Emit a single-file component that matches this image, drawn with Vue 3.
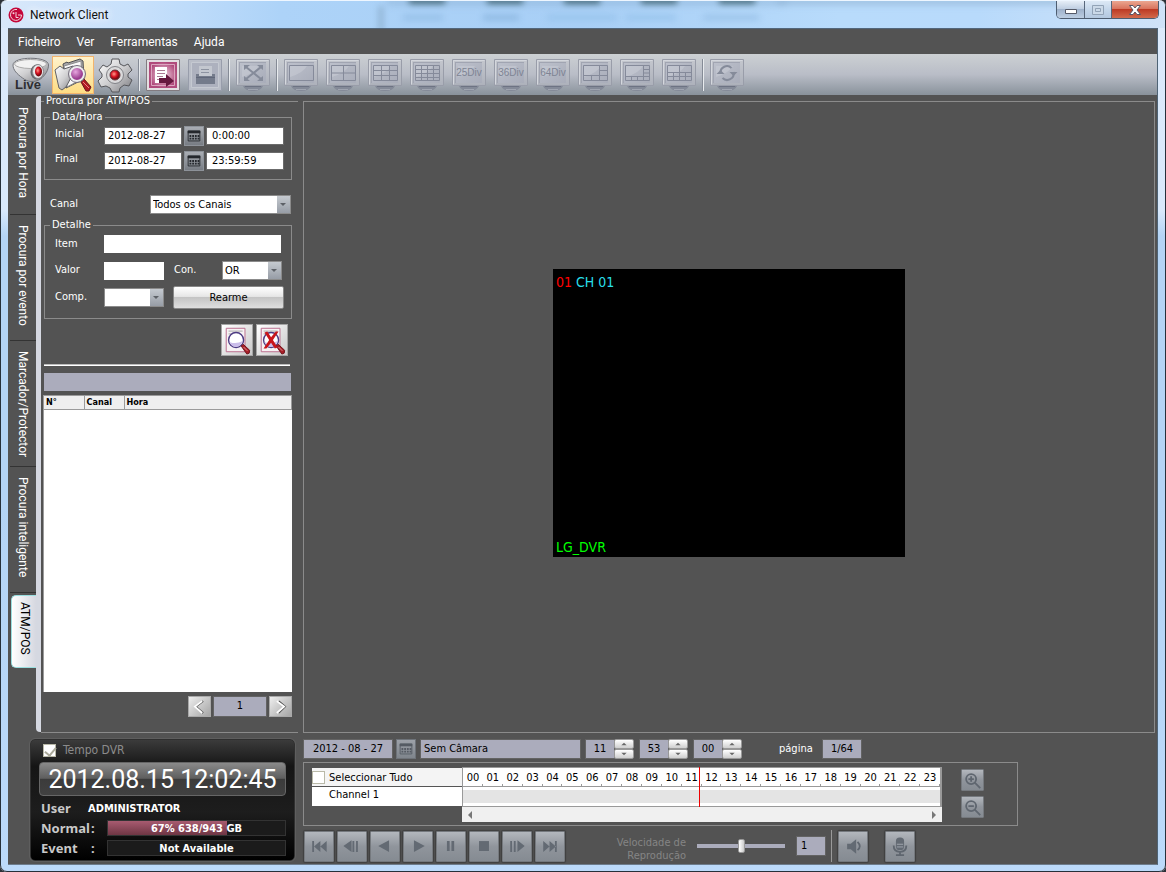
<script setup>
import { ref } from 'vue'

const menus = ['Ficheiro', 'Ver', 'Ferramentas', 'Ajuda']

const frame = 'M5.5 6.5h24v15h-24z'
const monitors = [
  { name: '1', d: frame },
  { name: '4', d: frame + 'M17.5 6.5v15M5.5 14h24' },
  { name: '9', d: frame + 'M13.5 6.5v15M21.5 6.5v15M5.5 11.5h24M5.5 16.5h24' },
  { name: '16', d: frame + 'M11.5 6.5v15M17.5 6.5v15M23.5 6.5v15M5.5 10.5h24M5.5 14.5h24M5.5 18.5h24' },
  { name: '25Div', text: true },
  { name: '36Div', text: true },
  { name: '64Div', text: true },
  { name: '1+5', d: frame + 'M21.5 6.5v15M5.5 16.5h24M21.5 11.5h8M13.5 16.5v5' },
  { name: '1+7', d: frame + 'M23.5 6.5v15M5.5 17.5h24M23.5 10.5h6M23.5 14h6M11.5 17.5v4M17.5 17.5v4' },
  { name: '2+8', d: frame + 'M17.5 6.5v15M5.5 13.5h24M5.5 17.5h24M11.5 13.5v8M23.5 13.5v8' }
]

const tabs = [
  { label: 'Procura por Hora', size: 'first' },
  { label: 'Procura por evento', size: 'mid' },
  { label: 'Marcador/Protector', size: 'mid' },
  { label: 'Procura inteligente', size: 'mid' },
  { label: 'ATM/POS', size: 'active' }
]
const activeTab = ref(4)

const dateRows = [
  { label: 'Inicial', date: '2012-08-27', time: '0:00:00' },
  { label: 'Final', date: '2012-08-27', time: '23:59:59' }
]

const hours = Array.from({ length: 24 }, (_, i) => String(i).padStart(2, '0'))
const clockFields = ref([
  { label: 'Hora', value: '11' },
  { label: 'Minuto', value: '53' },
  { label: 'Segundo', value: '00' }
])
const used = 67

const transport = [
  { name: 'Início', d: 'M8 10h2v12H8zM17 10v12l-7-6zM24 10v12l-7-6z' },
  { name: 'Imagem anterior', d: 'M15 9v13l-9-6.5zM16 10h2v12h-2zM20 10h2v12h-2z' },
  { name: 'Reproduzir para trás', d: 'M20 9v13L8 15.500z' },
  { name: 'Reproduzir', d: 'M11 9v13l12-6.500z' },
  { name: 'Pausa', d: 'M11 10h3v11h-3zM16 10h3v11h-3z' },
  { name: 'Parar', d: 'M10 10h11v11H10z' },
  { name: 'Imagem seguinte', d: 'M8 10h2v12H8zM12 10h2v12h-2zM16 9v13l8-6.500z' },
  { name: 'Fim', d: 'M8 10v12l7-6zM15 10v12l7-6zM21 10h2v12h-2z' }
]
</script>

<template>
  <div class="window">
    <header class="title">
      <svg class="glass" aria-hidden="true">
        <g class="soft">
          <rect x="386" y="-4" width="400" height="9" fill="#8fb4d6" opacity=".5" />
          <rect v-for="x in [408, 486, 563, 640, 718]" :key="x" :x="x" y="-4" width="36" height="7" fill="#476b7c" />
          <rect x="402" y="14" width="40" height="5" fill="#94bee6" />
          <rect x="482" y="14" width="36" height="5" fill="#8cb7e0" />
          <rect x="546" y="14" width="70" height="5" fill="#98c4ec" />
          <rect x="625" y="14" width="50" height="5" fill="#98c4ec" />
          <rect x="702" y="14" width="56" height="5" fill="#9ac2e8" />
          <rect x="378" y="5" width="4" height="26" fill="#8aacca" />
          <rect x="776" y="-3" width="300" height="7" fill="#8fb1d1" opacity=".6" />
        </g>
      </svg>
      <svg class="logo" viewBox="0 0 16 16" aria-hidden="true">
        <circle cx="8" cy="8" r="7.500" fill="#c4073a" />
        <path d="M9 2.500A5.500 5.500 0 1 0 13.500 8H10M8 5v5.500h2.500" fill="none" stroke="#f3d5dc" />
        <circle cx="5.500" cy="6.200" r="1" fill="#f3d5dc" />
      </svg>
      <h1>Network Client</h1>
      <div class="caption">
        <button type="button" aria-label="Minimizar"><svg viewBox="0 0 14 10"><path d="M1.500 4.500h11v4h-11z" fill="#fff" stroke="#555a68" /></svg></button>
        <button type="button" aria-label="Maximizar" disabled><svg viewBox="0 0 14 10"><path d="M1.500.5h11v9h-11zM4.500 3.500h5v3h-5z" fill="#cbd9e8" stroke="#92a3b7" /></svg></button>
        <button type="button" class="close" aria-label="Fechar"><svg viewBox="0 0 14 10"><path d="M1.500.5h3.500l2 2.500 2-2.500h3.500L9 5l3.500 4.500H9L7 7 5 9.500H1.500L5 5z" fill="#fff" stroke="#575464" /></svg></button>
      </div>
    </header>

    <div class="client">
      <nav class="menu">
        <button v-for="m in menus" :key="m" type="button">{{ m }}</button>
      </nav>

      <svg class="defs" aria-hidden="true">
        <defs>
          <linearGradient id="silver" x2="1" y2="1"><stop stop-color="#fff" /><stop offset=".5" stop-color="#cfcfd1" /><stop offset="1" stop-color="#7b7b7f" /></linearGradient>
          <linearGradient id="bezel" x2="0" y2="1"><stop stop-color="#c4c7ce" /><stop offset="1" stop-color="#adb1bb" /></linearGradient>
          <linearGradient id="screen" x2="1" y2="1"><stop stop-color="#bcc0cb" /><stop offset="1" stop-color="#a9adba" /></linearGradient>
          <radialGradient id="lens" cx=".4" cy=".35"><stop stop-color="#e7a6df" /><stop offset="1" stop-color="#9a3d90" /></radialGradient>
          <radialGradient id="redball" cx=".4" cy=".4"><stop stop-color="#ff9a8c" /><stop offset=".6" stop-color="#d61020" /><stop offset="1" stop-color="#7d0a12" /></radialGradient>
          <radialGradient id="pink"><stop stop-color="#f3dce7" /><stop offset="1" stop-color="#b04b7c" /></radialGradient>
          <symbol id="monitor" viewBox="0 0 34 32">
            <path d="M7 27h20q-2 5-10 5T7 27z" fill="#848a98" />
            <path d="M9 27.500h16" stroke="#6d7383" />
            <path d="M12 30.500h10" stroke="#a0a5b1" />
            <path d="M.5.5h33v26H.5z" fill="url(#bezel)" stroke="#999da9" />
            <path d="M1.500 25.500v-24h31" fill="none" stroke="#d4d7dd" />
            <path d="M3 3h27v21H3z" fill="#a1a5b2" />
            <path d="M4 4h26v20H4z" fill="url(#screen)" />
            <path d="M6 18V7h17q-4 7-17 11z" fill="#c8ccd5" opacity=".55" />
          </symbol>
          <symbol id="calendar" viewBox="0 0 20 20">
            <path d="M3 4h14v3H3z" /><path d="M3.500 4.500h13v11h-13z" fill="none" stroke="currentColor" />
            <path d="M5 9h2v2H5zM8 9h2v2H8zM11 9h2v2h-2zM14 9h2v2h-2zM5 12h2v2H5zM8 12h2v2H8zM11 12h2v2h-2zM14 12h2v2h-2z" />
          </symbol>
          <symbol id="find" viewBox="0 0 32 32">
            <path d="M4.500 3.500h20v25h-20z" fill="#f7f2f4" stroke="#b9698a" />
            <path d="M7 6.500h15M7 9.500h5" stroke="#a5a5a5" />
            <circle cx="15" cy="16" r="8" fill="#fff" stroke="#4d3b83" stroke-width="1.500" />
            <path d="M8 18q7 3 14-1-2 6-7 6.500-5 0-7-5.500z" fill="#cbbdea" />
            <path d="M20.500 22.500l2-2 7 6.500-.5 3-2.500 1z" fill="#a91e27" stroke="#6d1018" />
            <path d="M23 23.500l4 4" stroke="#e29a9c" />
          </symbol>
        </defs>
      </svg>

      <div class="toolbar">
        <button type="button" class="big" aria-label="Live">
          <svg viewBox="0 0 42 38">
            <path d="M3 9C3 0 38.500 0 38.500 9c0 5-3 10-8 14-6 4-13 3-18-1C7 18 3 14 3 9z" fill="url(#silver)" stroke="#717379" />
            <ellipse cx="20.500" cy="8" rx="16" ry="4.500" fill="#f2f2f2" stroke="#aaa" />
            <ellipse cx="27" cy="16" rx="6.500" ry="7.500" fill="#66666b" />
            <ellipse cx="28" cy="15.500" rx="5.500" ry="7" fill="#e9e9ea" stroke="#88888c" />
            <ellipse cx="28.500" cy="15.500" rx="3.500" ry="5" fill="url(#redball)" />
            <text x="5" y="33" class="live">Live</text>
          </svg>
        </button>
        <button type="button" class="big selected" aria-label="Procurar" aria-pressed="true">
          <svg viewBox="0 0 42 38">
            <path d="M11 8l4-2 1 1 12-4 3 2 1 18-18 9z" fill="#a9a9ab" stroke="#4f4f52" />
            <path d="M12 10l17-5 1 18-15 8z" fill="#fafafa" stroke="#8a8a8c" />
            <path d="M3 14l5-4 4 3 9-3 1 6-8 15-4 3-3-2z" fill="url(#silver)" stroke="#606064" />
            <path d="M29 26l3-3 7 8-2 4h-3z" fill="#b11b22" stroke="#65161b" />
            <path d="M31 26l6 6" stroke="#ee8681" />
            <circle cx="25" cy="18" r="7" fill="url(#lens)" stroke="#ececef" stroke-width="2" />
            <circle cx="25" cy="18" r="8.500" fill="none" stroke="#77707e" />
          </svg>
        </button>
        <button type="button" class="big" aria-label="Configuração">
          <svg viewBox="0 0 42 38">
            <path d="M18 3h7l1 5 4 2 4-2 4 6-4 4v3l4 3-3 6-5-1-4 3-1 4h-7l-2-4-4-2-5 1-3-6 4-4v-3l-3-4 4-5 4 2 4-3z" fill="url(#silver)" stroke="#56575b" />
            <circle cx="21" cy="19" r="8.500" fill="#dadadb" stroke="#818287" />
            <circle cx="21" cy="19" r="5" fill="url(#redball)" stroke="#64343a" />
          </svg>
        </button>
        <i class="sep"></i>
        <button type="button" class="tool" aria-label="Exportar">
          <svg viewBox="0 0 34 32">
            <path d="M.5.500h33v31H.500z" fill="#e4dfe2" stroke="#827b80" /><path d="M3 3h28v26H3z" fill="url(#pink)" /><path d="M5.500 5.500h23v21h-23z" fill="none" stroke="#dba6bf" />
            <path d="M9 8h12v16H9z" fill="#fff" /><path d="M11 11.500h8M11 14.500h8M11 17.500h6M11 20.500h3" stroke="#ab7b94" />
            <path d="M13 19h7v-4l8 7-8 6v-4h-7z" fill="#65193f" />
          </svg>
        </button>
        <button type="button" class="tool" aria-label="Imprimir">
          <svg viewBox="0 0 34 32">
            <path d="M.5.500h33v31H.500z" fill="#b9bdc7" stroke="#989dab" /><path d="M3.500 3.500h27v25h-27z" fill="#adb1be" stroke="#c5c9d1" />
            <path d="M8 15h19v10H8z" fill="#747b8b" /><path d="M11 7h13v10H11z" fill="#c3c7cf" /><path d="M13 10.500h8M13 13.500h8" stroke="#8d93a1" />
            <path d="M8 18.500h19" stroke="#606779" />
          </svg>
        </button>
        <i class="sep"></i>
        <button type="button" class="tool" aria-label="Ecrã inteiro">
          <svg viewBox="0 0 34 32"><use href="#monitor" /><path d="M10 8l15 12M25 8L10 20" stroke="#858b9a" stroke-width="2" /><path d="M8 6h6l-6 5zM27 6h-6l6 5zM8 22h6l-6-5zM27 22h-6l6-5z" fill="#858b9a" /></svg>
        </button>
        <i class="sep"></i>
        <button v-for="m in monitors" :key="m.name" type="button" class="tool" :aria-label="m.name">
          <svg viewBox="0 0 34 32">
            <use href="#monitor" />
            <text v-if="m.text" x="17" y="17" text-anchor="middle" class="div">{{ m.name }}</text>
            <path v-else :d="m.d" fill="none" stroke="#858a9a" />
          </svg>
        </button>
        <i class="sep"></i>
        <button type="button" class="tool" aria-label="Actualizar">
          <svg viewBox="0 0 34 32"><use href="#monitor" /><path d="M10.500 14a6.500 6.500 0 0 1 11-5M23.500 13a6.500 6.500 0 0 1-11 6" fill="none" stroke="#858b9a" stroke-width="2" /><path d="M6.500 15l4-4 4 4zM19.500 13h8l-4 4z" fill="#858b9a" /></svg>
        </button>
      </div>

      <div class="main">
        <nav class="tabs">
          <button v-for="(t, i) in tabs" :key="t.label" type="button" :class="[t.size, { on: activeTab === i }]" @click="activeTab = i"><span>{{ t.label }}</span></button>
        </nav>
        <div class="strip"></div>

        <fieldset class="panel">
          <legend>Procura por ATM/POS</legend>
          <fieldset class="group dates">
            <legend>Data/Hora</legend>
            <div v-for="(r, i) in dateRows" :key="r.label" class="row">
              <label :for="'date' + i">{{ r.label }}</label>
              <input :id="'date' + i" class="date" type="text" :value="r.date">
              <button type="button" class="cal" aria-label="Calendário"><svg fill="currentColor"><use href="#calendar" /></svg></button>
              <input class="date" type="text" :value="r.time" :aria-label="r.label + ' hora'">
            </div>
          </fieldset>

          <div class="row channel">
            <label for="canal">Canal</label>
            <span class="select"><select id="canal"><option>Todos os Canais</option></select></span>
          </div>

          <fieldset class="group detail">
            <legend>Detalhe</legend>
            <div class="row"><label for="item">Item</label><input id="item" class="item" type="text"></div>
            <div class="row"><label for="valor">Valor</label><input id="valor" class="short" type="text"><label for="con" class="con">Con.</label><span class="select short"><select id="con"><option>OR</option></select></span></div>
            <div class="row"><label for="comp">Comp.</label><span class="select short"><select id="comp"><option></option></select></span><button type="button" class="reset">Rearme</button></div>
          </fieldset>

          <div class="actions">
            <button type="button" aria-label="Procurar"><svg viewBox="0 0 32 32"><use href="#find" /></svg></button>
            <button type="button" aria-label="Cancelar procura"><svg viewBox="0 0 32 32"><use href="#find" /><path d="M8 8l3-1 4 6 5-6h3l-6 9 5 8-3 1-4-6-5 6H7l6-9z" fill="#c9151b" /></svg></button>
          </div>
          <div class="rule"></div>
          <div class="status"></div>
          <div class="list">
            <table>
              <thead><tr><th class="c1">N°</th><th class="c1">Canal</th><th>Hora</th></tr></thead>
            </table>
          </div>
          <div class="pager">
            <button type="button" aria-label="Página anterior"><svg viewBox="0 0 23 21"><path d="M15.500 4.500l-8 6 8 7" /><path class="w" d="M14.500 4.500l-8 6 8 7" /></svg></button>
            <output>1</output>
            <button type="button" aria-label="Página seguinte"><svg viewBox="0 0 23 21"><path d="M9.500 4.500l7 6-7 7" /><path class="w" d="M7.500 4.500l8 6-8 7" /></svg></button>
          </div>
        </fieldset>

        <main class="viewer">
          <div class="video">
            <p><span class="num">01</span> CH 01</p>
            <p class="dvr">LG_DVR</p>
          </div>
        </main>
      </div>

      <div class="bottom">
        <section class="status-box">
          <label class="tempo"><input type="checkbox" checked disabled>Tempo DVR</label>
          <div class="clock">2012.08.15 12:02:45</div>
          <div class="info"><b>User</b><strong>ADMINISTRATOR</strong></div>
          <div class="info"><b>Normal</b><b>:</b><div class="meter"><div class="fill" :style="{ width: used + '%' }"></div><span>67% 638/943 GB</span></div></div>
          <div class="info"><b>Event</b><b>:</b><div class="meter"><span>Not Available</span></div></div>
        </section>

        <section class="controls">
          <div class="timebar">
            <output class="day">2012 - 08 - 27</output>
            <button type="button" class="cal dim" aria-label="Calendário"><svg fill="currentColor"><use href="#calendar" /></svg></button>
            <output class="camera">Sem Câmara</output>
            <div v-for="f in clockFields" :key="f.label" class="spin">
              <input v-model="f.value" type="text" :aria-label="f.label">
              <span><button type="button" aria-label="Mais"><svg viewBox="0 0 20 9"><path d="M10 3l3 3H7z" /></svg></button><button type="button" aria-label="Menos"><svg viewBox="0 0 20 9"><path d="M10 6L7 3h6z" /></svg></button></span>
            </div>
            <label for="page" class="pg">página</label>
            <output id="page" class="pages">1/64</output>
          </div>

          <div class="timeline">
            <div class="channels">
              <label class="all"><input type="checkbox">Seleccionar Tudo</label>
              <div class="ch">Channel 1</div>
            </div>
            <div class="track">
              <div class="hours"><span v-for="h in hours" :key="h">{{ h }}</span></div>
              <div class="lane"></div>
              <div class="scroll"><svg viewBox="0 0 8 8"><path d="M6 0v8L2 4z" /></svg><svg viewBox="0 0 8 8"><path d="M2 0v8l4-4z" /></svg></div>
              <i class="cursor"></i>
            </div>
            <div class="zooms">
              <button type="button" aria-label="Ampliar"><svg viewBox="0 0 23 22"><circle cx="10" cy="10" r="5.500" /><path d="M14 14l6 6M7 10h6M10 7v6" /></svg></button>
              <button type="button" aria-label="Reduzir"><svg viewBox="0 0 23 22"><circle cx="10" cy="10" r="5.500" /><path d="M14 14l6 6M7 10h6" /></svg></button>
            </div>
          </div>

          <div class="play">
            <button v-for="b in transport" :key="b.name" type="button" :aria-label="b.name"><svg viewBox="0 0 31 32"><path :d="b.d" /></svg></button>
            <label for="speed">Velocidade de Reprodução</label>
            <input id="speed" type="range" min="0" max="10" value="5">
            <output class="speed">1</output>
            <i></i>
            <button type="button" aria-label="Som"><svg viewBox="0 0 31 32"><path d="M9 13h4l6-5v16l-6-5H9z" /><path class="ln" d="M20.500 11q5 5 0 9" /></svg></button>
            <button type="button" class="mic" aria-label="Microfone"><svg viewBox="0 0 31 32"><rect x="11" y="6" width="9" height="14" rx="4" /><path d="M12 13.500h7M12 16.500h7" stroke="#a5abb2" /><path class="ln" d="M8.500 15q0 7 7 7t7-7M15.500 22v3M11 25.500h9" /></svg></button>
          </div>
        </section>
      </div>
    </div>
  </div>
</template>

<style>
body { margin: 0; background: #2c3138; }
</style>

<style scoped>
* { box-sizing: border-box; }
button, input, select { font: inherit; color: inherit; margin: 0; padding: 0; border: 0; border-radius: 0; background: none; }
button svg { display: block; }
p, h1 { margin: 0; font-weight: normal; }
.window {
  min-height: 100vh; display: flex; flex-direction: column; padding: 0 7px 6px 7px;
  border: 1px solid #e8f3ff; border-top: 0; outline: 1px solid #26303a; outline-offset: -1px; border-radius: 7px;
  background: linear-gradient(#dceafb, #d9e9fb 210px, #b4d4f5 236px, #b4d4f5 500px, #bcdafa);
  font: 11px/13px "DejaVu Sans Condensed", "Noto Sans", sans-serif; color: #fff;
}
.title { position: relative; display: flex; align-items: center; height: 28px; margin: 0 -7px; padding: 0 6px 0 7px; border-radius: 6px 6px 0 0; overflow: hidden; color: #111;
  border-top: 1px solid #eef6ff; background: linear-gradient(90deg, #d8e8fa, #c7e0fb 12%, #add3f8 24%, #a8cff6 50%, #b8dbfb 72%, #b8dafb 84%, #cfe2f8); }
.glass { position: absolute; inset: 0; width: 100%; height: 100%; }
.soft { filter: blur(3px); }
.logo { position: relative; width: 16px; height: 16px; margin-right: 6px; }
h1 { position: relative; font: 12px/20px Roboto, sans-serif; text-shadow: 0 0 8px #fff, 0 0 8px #fff; }
.caption { position: relative; display: flex; align-self: flex-start; margin-left: auto; border: 1px solid #4e5d70; border-top: 0; border-radius: 0 0 5px 5px; overflow: hidden; }
.caption button { width: 28px; height: 17px; display: grid; place-items: center; border-right: 1px solid #58677b; background: linear-gradient(#e6eef7, #c0cfe2 45%, #9fb2cb 50%, #bdcee2); }
.caption button:disabled { width: 27px; background: linear-gradient(#dce8f5, #c4d6ea 50%, #b4c8df); }
.caption .close { width: 46px; border: 0; background: linear-gradient(#eba691, #d9745e 45%, #bd3b25 50%, #d26a4c); }
.caption svg { width: 14px; height: 10px; }
.client { flex: 1; display: flex; flex-direction: column; border-right: 1px solid #4e6375; border-bottom: 1px solid #6d7c8c; background: #535353; }
.defs { position: absolute; width: 0; height: 0; }
.menu { display: flex; align-items: center; gap: 16px; height: 26px; padding-left: 10px; border-top: 1px solid #52667b; font: 12px/20px Roboto, sans-serif; }
.toolbar { display: flex; align-items: center; gap: 8px; height: 41px; padding-left: 2px; background: linear-gradient(#ccd0d3, #b9bdc7 50%, #89929b); }
.toolbar .big { width: 42px; height: 38px; margin-right: -8px; }
.toolbar .sep { width: 2px; height: 32px; margin: 0 -2px; border-left: 1px solid #858b96; background: #e8ebee; }
.toolbar .big + .sep { margin-left: 2px; }
.toolbar .selected { outline: 1px solid #f2b46c; outline-offset: -1px; background: linear-gradient(#fff3cd, #fddc82); }
.toolbar .tool { width: 34px; height: 32px; }
.live { font: bold 13px "Liberation Sans", sans-serif; fill: #2e2e31; }
.div { font: 10px "Liberation Sans", sans-serif; fill: #7e8494; }
.main { flex: 1; display: flex; }
.tabs { width: 28px; display: flex; flex-direction: column; }
.tabs button { margin-left: 2px; padding-top: 10px; display: flex; align-items: center; flex-direction: column; border-bottom: 1px solid #333; font: 12px/20px Roboto, sans-serif; }
.tabs span { writing-mode: vertical-rl; }
.tabs .first { height: 120px; padding-top: 12px; }
.tabs .mid { height: 126px; }
.tabs .active { height: 73px; margin: 2px -1px 0 3px; padding-top: 6px; border: 1px solid #9adfe0; border-right: 0; border-radius: 5px 0 0 5px; }
.tabs .on { color: #000; background: linear-gradient(90deg, #fff, #d4d6df); }
.strip { width: 5px; margin: 1px 0; border-radius: 4px 0 0 4px; background: #d5d8e1; }
.panel { width: 257px; margin: 0 5px 0 0; padding: 0 6px 15px 2px; min-width: 0; border: solid #8b8b8b; border-width: 1px 0; display: flex; flex-direction: column; }
legend { padding: 0 2px; line-height: 12px; }
.panel > legend { margin-left: 1px; }
.group { margin: 0 0 0 1px; padding: 0 0 0 10px; border: 1px solid #8b8b8b; }
.group legend { margin-left: -5px; }
.panel > .dates { margin-top: 4px; padding-bottom: 6px; }
.detail { padding-bottom: 7px; }
.row { display: flex; align-items: center; }
.row > label { width: 49px; padding-bottom: 4px; }
.dates .row { height: 25px; }
input[type=text], select { background: #fff; color: #000; }
.date { width: 78px; height: 18px; padding-left: 4px; outline: 1px solid #6b6b6b; outline-offset: -1px; }
.cal { width: 20px; height: 20px; margin: 0 2px; border: 1px solid #8d9299; background: linear-gradient(#a9adb3, #777c83); color: #25282d; }
.cal svg { width: 18px; height: 18px; }
.dates .cal + .date { padding-left: 6px; }
.channel { justify-content: space-between; height: 22px; margin: 13px 1px 0 7px; }
.channel > label { padding-bottom: 2px; }
.select { position: relative; display: block; width: 141px; height: 19px; border: 1px solid #8b8b8b; }
.select::after { content: ""; position: absolute; right: 0; top: 0; width: 13px; height: 17px; background: linear-gradient(#c5cad0, #979da6); pointer-events: none; }
.select::before { content: ""; position: absolute; z-index: 1; right: 4px; top: 7px; border: solid transparent; border-width: 3px 3px 0; border-top-color: #5d6167; pointer-events: none; }
select { appearance: none; display: block; width: 100%; height: 17px; padding-left: 2px; }
.short { width: 60px; height: 18px; }
.select.short { height: 19px; }
.item { width: 177px; height: 18px; }
.detail { margin-top: 4px; }
.detail .row { height: 27px; }
.detail .row > label { padding-bottom: 2px; }
.detail legend + .row { height: 26px; }
.detail .con { width: 58px; padding-left: 10px; }
.reset { width: 111px; height: 23px; margin-left: 9px; border: 1px solid #888; border-radius: 2px; background: linear-gradient(#fff, #e6e6e6 45%, #c4c4c4 50%, #dedede); color: #000; }
.actions { display: flex; justify-content: flex-end; gap: 3px; margin: 5px 4px 8px 0; }
.actions button { width: 32px; height: 32px; border: 1px solid #a5a5a5; background: linear-gradient(135deg, #fff, #c9c9c9); }
.actions svg { width: 30px; height: 30px; }
.rule { height: 2px; margin: 0 2px 7px 1px; background: #fff; border-top: 1px solid #bbb; }
.status { height: 18px; margin: 0 1px 4px; background: #abacbc; }
.list { flex: 1; background: #fff; border: solid #9b9b9b; border-width: 1px 0 0 1px; color: #000; }
table { width: 100%; table-layout: fixed; border-collapse: collapse; }
th { height: 13px; padding: 0 2px; text-align: left; font: bold 9px/12px "DejaVu Sans Condensed", sans-serif; background: #efefef; border: solid #9b9b9b; border-width: 0 1px 1px 0; }
.c1 { width: 40px; }
.pager { display: flex; justify-content: flex-end; align-items: center; gap: 3px; margin-top: 4px; }
.pager button { width: 23px; height: 21px; border: 1px solid #a9a9a9; background: linear-gradient(135deg, #eee, #a5a5a5); }
.pager path { fill: none; stroke: #4d4d4d; stroke-width: 2; }
.pager .w { stroke: #fff; }
output { display: block; height: 18px; line-height: 18px; background: #abacbc; color: #000; outline: 1px solid #636363; }
.pager output { width: 52px; height: 19px; text-align: center; }
.viewer { flex: 1; margin: 6px 2px 0 0; display: grid; place-items: center; border: 1px solid #8b8b8b; }
.video { width: 352px; height: 288px; margin-top: -8px; padding: 4px 3px 1px; display: flex; flex-direction: column; justify-content: space-between; background: #000; color: #28dfe8; font: 14px/18px "DejaVu Sans Condensed", sans-serif; }
.num { color: #f00; }
.dvr { color: #0f0; }
.bottom { display: flex; gap: 8px; padding: 6px 0 2px 22px; }
.status-box { width: 265px; height: 122px; padding: 4px 8px 0 8px; border: 1px solid #303030; border-radius: 5px; outline: 1px solid #5e5e5e; background: linear-gradient(#3b3b3b, #151515 22%, #1d1d1d 60%, #000); color: #ddd; }
.tempo { display: flex; align-items: center; gap: 7px; height: 13px; margin: 0 0 5px 4px; font-size: 12px; color: #8c8c8c; }
input[type=checkbox] { appearance: none; position: relative; width: 13px; height: 13px; background: #fff; border: 1px solid #b9b9a8; }
input:checked::after { content: ""; position: absolute; left: 3px; top: 0; width: 5px; height: 9px; border: solid #aaa99a; border-width: 0 2px 2px 0; transform: rotate(40deg); }
.clock { height: 34px; text-align: center; border: 1px solid #666; border-radius: 4px; background: linear-gradient(#8a8a8a, #5e5e5e 48%, #3b3b3b 50%, #414141); color: #fff; font: 25px/34px Roboto, sans-serif; white-space: nowrap; }
.info { display: flex; align-items: center; height: 20px; font-size: 11px; color: #fff; }
.clock + .info { margin-top: 2px; }
.info b { width: 52px; padding-left: 2px; color: #c9c9c9; font: bold 13px/20px "Noto Sans", sans-serif; }
.clock + .info b { width: 49px; }
.info b + b { width: 16px; padding-left: 0; }
.meter { position: relative; flex: 1; height: 16px; border: 1px solid #333; background: #1b1b1b; text-align: center; font-weight: bold; line-height: 15px; }
.meter span { position: relative; }
.fill { position: absolute; inset: 0 auto 0 0; background: linear-gradient(#a85b70, #6f3644); }
.controls { flex: 1; min-width: 0; }
.timebar { display: flex; align-items: center; height: 19px; }
.day { width: 88px; margin-left: 1px; text-align: center; }
.dim { margin: 0 5px 0 4px; color: #555b63; background: linear-gradient(#9ca1a8, #7f858c); border-color: #6e7379; }
.camera { width: 159px; margin-right: 6px; padding-left: 3px; }
.spin { display: flex; align-items: center; width: 48px; margin-right: 6px; }
.spin input { width: 28px; height: 18px; text-align: center; background: #abacbc; outline: 1px solid #636363; }
.spin button { display: block; width: 20px; height: 10px; border: 1px solid #999; border-radius: 2px; background: linear-gradient(#fff, #cfcfcf); }
.spin svg { width: 18px; height: 8px; fill: #666; }
.pg { width: 44px; margin-left: 31px; }
.pages { width: 38px; text-align: center; }
.timeline { display: flex; width: 715px; height: 64px; margin-top: 4px; padding: 4px 8px; border: 1px solid #8b8b8b; color: #000; }
.channels { width: 150px; height: 38px; margin-top: 1px; background: #fff; }
.all { display: flex; align-items: center; gap: 4px; height: 19px; background: #f4f4f4; border-bottom: 1px solid #555; }
.ch { padding-left: 17px; line-height: 15px; }
.track { position: relative; width: 480px; }
.hours { display: grid; grid-template-columns: repeat(24, 1fr); height: 20px; background: #fff; border: 1px solid #999; border-right-width: 2px; font-size: 11px; line-height: 19px; text-align: center; }
.hours span { background: linear-gradient(#999, #999) right bottom / 1px 3px no-repeat; }
.lane { height: 20px; background: linear-gradient(#fff 3px, #e4e4e4 3px, #e4e4e4 16px, #fff 16px); border: solid #999; border-width: 0 2px 1px 1px; }
.scroll { display: flex; justify-content: space-between; align-items: center; height: 15px; padding: 0 4px; background: #f0f0f0; }
.scroll svg { width: 8px; height: 8px; fill: #777; }
.cursor { position: absolute; left: 237px; top: 0; width: 1px; height: 40px; background: #e00; }
.zooms { display: flex; flex-direction: column; gap: 5px; margin: 2px 0 0 19px; }
.zooms button { width: 23px; height: 22px; }
.zooms button, .play button { border: 1px solid #75797e; border-radius: 1px; background: linear-gradient(#b3b7bd, #90959c 50%, #858b92); }
.zooms svg { width: 21px; height: 20px; }
.zooms svg, .ln { fill: none; stroke: #5f666f; stroke-width: 2; }
.play { display: flex; align-items: center; gap: 3px; margin: 4px 0 0 1px; }
.play button { width: 30px; height: 31px; box-shadow: 0 0 1px 1px #404040; }
.play svg { width: 28px; height: 29px; fill: #636a73; }
.play .ln { fill: none; }
.play label { width: 80px; height: 26px; margin: 6px 8px 0 38px; text-align: right; color: #858585; overflow: hidden; }
.play input { appearance: none; width: 88px; height: 14px; background: linear-gradient(#abacbc, #abacbc) center / 100% 4px no-repeat; }
.play input::-webkit-slider-thumb { appearance: none; width: 7px; height: 14px; border: 1px solid #999; border-radius: 2px; background: linear-gradient(90deg, #fff, #ccc); }
.play .speed { width: 28px; margin-left: 9px; padding-left: 4px; }
.play i { width: 1px; height: 32px; margin: 0 3px; background: #999; }
.play .mic { margin-left: 14px; }
</style>
